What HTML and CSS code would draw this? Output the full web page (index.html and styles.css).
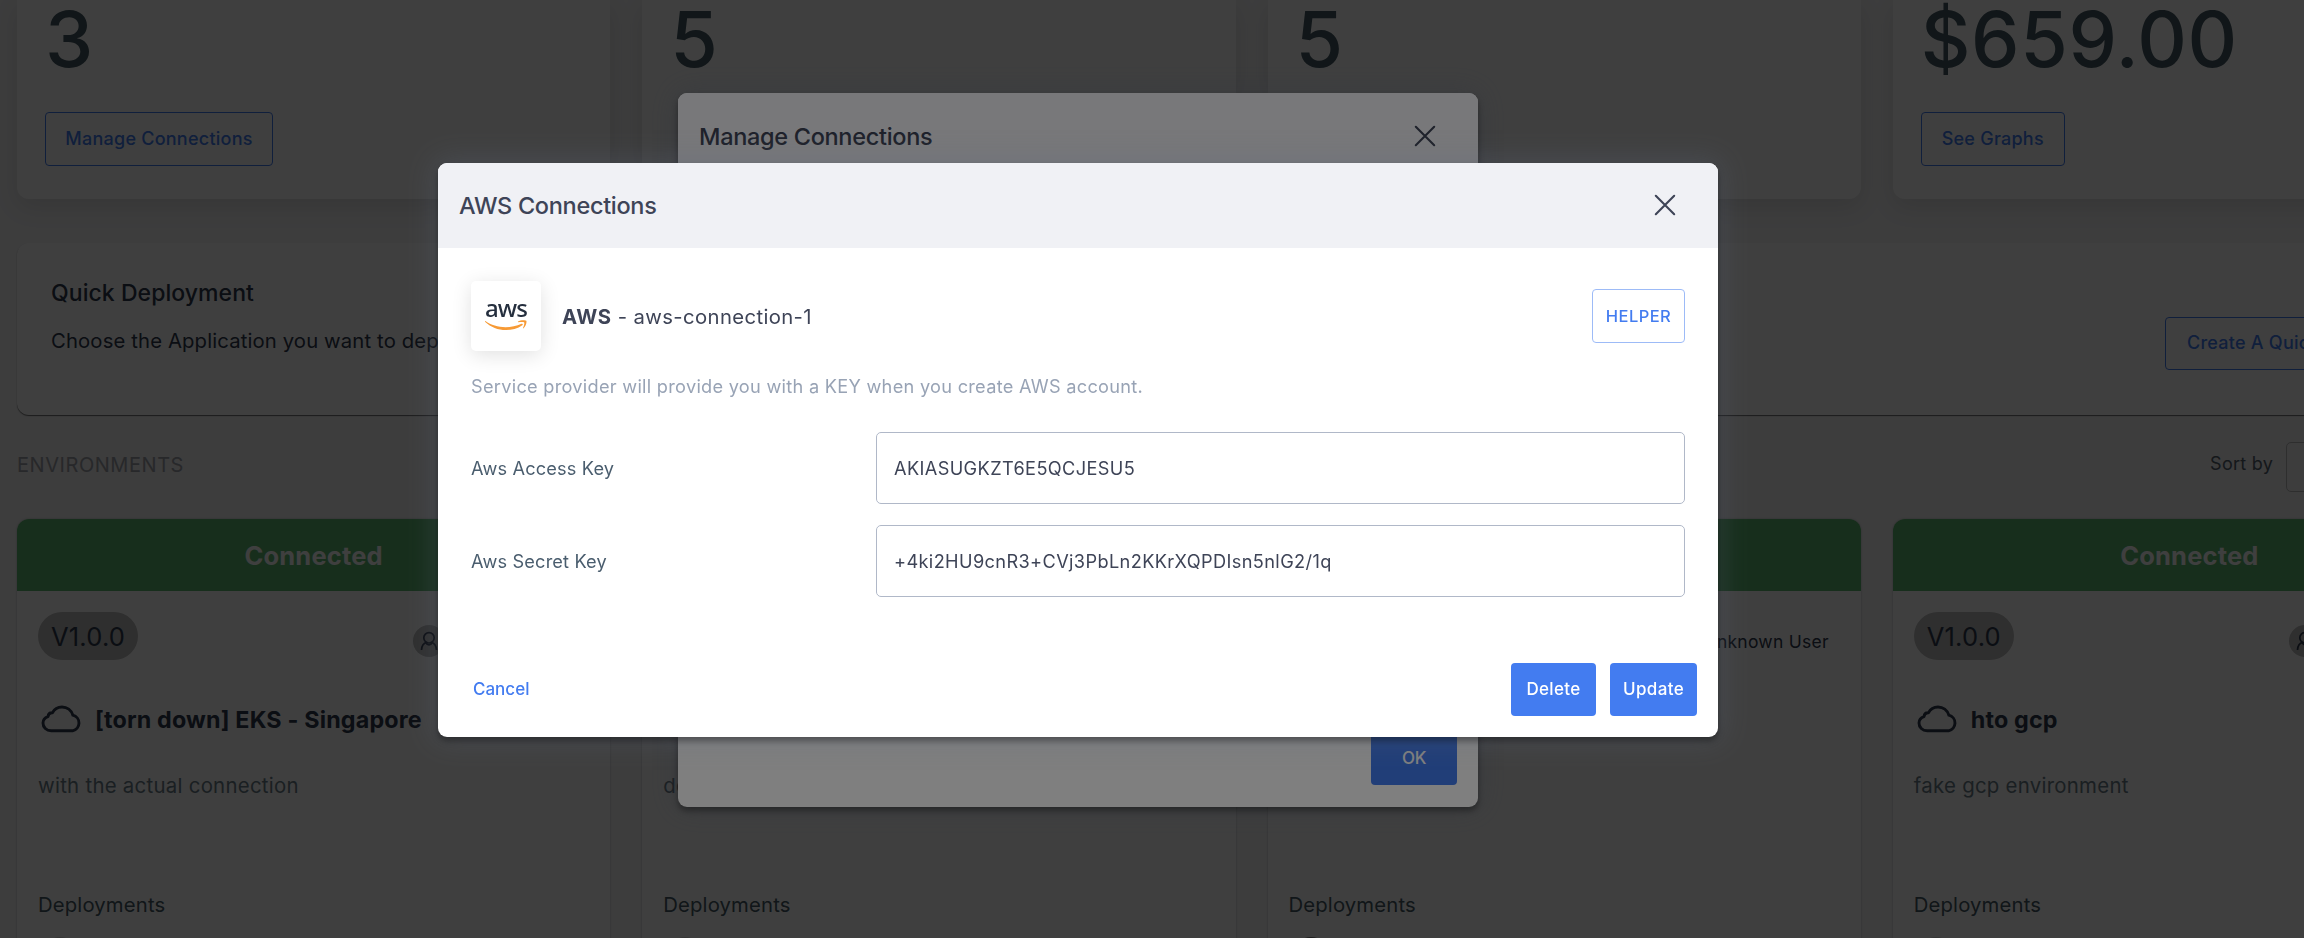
FILE: index.html
```html
<!DOCTYPE html>
<html lang="en">
<head>
<meta charset="utf-8">
<title>Dashboard</title>
<link rel="stylesheet" href="styles.css">
</head>
<body>
<svg class="sprite" aria-hidden="true">
  <symbol id="cloud" viewBox="0 0 42 28">
    <path d="M10.2 25.8H31.6A8 8 0 0 0 31.9 10.2C30.3 5.2 26 2 21 2C17 2 13.3 4.2 11.4 7.8C8.8 7.6 7.3 9.2 7 11.6C4.2 12.6 2 15 2 18C2 22.4 5.4 25.8 10.2 25.8Z" fill="none" stroke="currentColor" stroke-width="2.9" stroke-linejoin="round"/>
  </symbol>
  <symbol id="user" viewBox="0 0 32 32">
    <g fill="none" stroke="currentColor" stroke-width="1.7">
      <circle cx="16" cy="12.8" r="5.2"/>
      <path d="M8.5 25C8.5 21 11 17.8 13.4 17.3C13.4 20.6 18.6 20.6 18.6 17.3C21 17.800 23.500 21 23.500 25"/>
    </g>
  </symbol>
  <symbol id="close" viewBox="0 0 22 22">
    <path d="M1.800 1.800L20.200 20.200M20.200 1.800L1.800 20.200" fill="none" stroke="currentColor" stroke-width="2.100" stroke-linecap="round"/>
  </symbol>
</svg>

<main class="page">
  <section class="stats">
    <article class="stat"><div class="stat-value">3</div><button class="btn-outline stat-btn-wide">Manage Connections</button></article>
    <article class="stat"><div class="stat-value">5</div></article>
    <article class="stat"><div class="stat-value">5</div></article>
    <article class="stat"><div class="stat-value">$659.00</div><button class="btn-outline stat-btn">See Graphs</button></article>
  </section>

  <section class="quick">
    <div>
      <h2 class="quick-title">Quick Deployment</h2>
      <p class="quick-text">Choose the Application you want to deploy</p>
    </div>
    <button class="btn-outline quick-btn">Create A Quick Deployment</button>
  </section>

  <section class="toolbar">
    <h3 class="toolbar-title">ENVIRONMENTS</h3>
    <div class="sort"><span class="sort-label">Sort by</span><div class="select"></div></div>
  </section>

  <section class="envs">
    <article class="env">
      <header class="env-status">Connected</header>
      <div class="env-body">
        <div class="env-meta"><span class="badge">V1.0.0</span><span class="owner"><svg class="owner-icon"><use href="#user"/></svg>Unknown User</span></div>
        <div class="env-name"><svg class="cloud"><use href="#cloud"/></svg>[torn down] EKS - Singapore</div>
        <p class="env-desc">with the actual connection</p>
        <p class="env-sub">Deployments</p>
        <span class="dot"></span>
      </div>
    </article>
    <article class="env">
      <header class="env-status"></header>
      <div class="env-body">
        <div class="env-meta"><span class="badge"></span></div>
        <div class="env-name"><svg class="cloud"><use href="#cloud"/></svg></div>
        <p class="env-desc">de</p>
        <p class="env-sub">Deployments</p>
        <span class="dot"></span>
      </div>
    </article>
    <article class="env">
      <header class="env-status"></header>
      <div class="env-body">
        <div class="env-meta"><span class="badge"></span><span class="owner"><svg class="owner-icon"><use href="#user"/></svg>Unknown User</span></div>
        <div class="env-name"><svg class="cloud"><use href="#cloud"/></svg></div>
        <p class="env-desc"></p>
        <p class="env-sub">Deployments</p>
        <span class="dot dot-dark"></span>
      </div>
    </article>
    <article class="env">
      <header class="env-status">Connected</header>
      <div class="env-body">
        <div class="env-meta"><span class="badge">V1.0.0</span><span class="owner"><svg class="owner-icon"><use href="#user"/></svg>Unknown User</span></div>
        <div class="env-name"><svg class="cloud"><use href="#cloud"/></svg>hto gcp</div>
        <p class="env-desc">fake gcp environment</p>
        <p class="env-sub">Deployments</p>
        <span class="dot"></span>
      </div>
    </article>
  </section>
</main>

<div class="overlay">
  <section class="modal modal-manage">
    <header class="modal-head"><h2 class="modal-title">Manage Connections</h2><svg class="close"><use href="#close"/></svg></header>
    <footer class="manage-foot"><button class="btn-solid btn-ok">OK</button></footer>
  </section>
</div>

<div class="overlay">
  <section class="modal modal-aws">
    <header class="modal-head"><h2 class="modal-title">AWS Connections</h2><svg class="close"><use href="#close"/></svg></header>
    <div class="aws-body">
      <div class="provider">
        <div class="tile">
          <span class="aws-word">aws</span>
          <svg class="aws-smile" viewBox="0 0 42 10">
            <path d="M.4 1C6 5 13 7.200 20.500 7.200C26 7.200 31.600 6.100 36.600 3.800C37.600 3.400 38.200 4.500 37.300 5.200C32.800 8.500 26.500 10 21 10C13 10 5.800 7.100 .3 1.900C-.2 1.400 0 .8 .4 1Z" fill="#f79a35"/>
            <path d="M33 1.400C35.500 -.2 40.600 -.1 41.300 .8C42 1.700 41 6.300 38.500 8.300C38.100 8.600 37.800 8.400 38 8C38.600 6.500 39.800 3.300 39.200 2.500C38.600 1.700 35 2 33.500 2.200C33 2.200 32.700 1.700 33 1.400Z" fill="#f79a35"/>
          </svg>
        </div>
        <p class="provider-name"><b>AWS</b> - aws-connection-1</p>
        <button class="btn-outline btn-helper">HELPER</button>
      </div>
      <p class="hint">Service provider will provide you with a KEY when you create AWS account.</p>
      <div class="field"><label class="field-label">Aws Access Key</label><div class="field-input">AKIASUGKZT6E5QCJESU5</div></div>
      <div class="field"><label class="field-label">Aws Secret Key</label><div class="field-input">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</div></div>
    </div>
    <footer class="aws-foot">
      <a class="cancel">Cancel</a>
      <div class="actions"><button class="btn-solid btn-delete">Delete</button><button class="btn-solid btn-update">Update</button></div>
    </footer>
  </section>
</div>
</body>
</html>
```

FILE: styles.css
```css
* { box-sizing: border-box; margin: 0; }

body {
  height: 938px;
  overflow: hidden;
  background: #f4f4f5;
  font-family: Inter, "Liberation Sans", sans-serif;
  color: #2e384d;
}

.sprite { position: absolute; width: 0; height: 0; }
h2, h3 { font-weight: 500; }
button { font-family: inherit; padding: 0; white-space: nowrap; }

.page { width: 2486px; height: 938px; padding-left: 17px; overflow: hidden; }

.btn-outline {
  height: 54px;
  padding-bottom: 2px;
  border: 1px solid #437cf0;
  border-radius: 4px;
  background: none;
  color: #437cf0;
  font-size: 18px;
  font-weight: 500;
  letter-spacing: .24px;
}

.btn-solid {
  padding-bottom: 1px;
  border: 0;
  border-radius: 4px;
  background: #437cf0;
  color: #fff;
  font-size: 17px;
  font-weight: 500;
  letter-spacing: .35px;
}

/* Summary cards */
.stats, .envs { display: grid; grid-template-columns: repeat(4, 1fr); gap: 32px; }

.stat {
  height: 199px;
  padding: 0 28px;
  border-radius: 0 0 12px 12px;
  background: #fff;
  box-shadow: 0 8px 24px rgba(0, 0, 0, .1);
}

.stat-value {
  margin-bottom: 33px;
  color: #455a64;
  font-size: 77px;
  font-weight: 500;
  line-height: 79px;
  letter-spacing: .6px;
}

.stat-btn-wide { width: 228px; }
.stat-btn { width: 144px; }

/* Quick deployment */
.quick {
  display: flex;
  justify-content: space-between;
  height: 172px;
  margin-top: 44px;
  padding: 35px 27px 0 34px;
  border-radius: 12px;
  background: #fff;
  box-shadow: 0 1px 1px rgba(0, 0, 0, .55);
}

.quick-title { font-size: 23px; line-height: 30px; letter-spacing: .06px; }
.quick-text { margin-top: 20px; font-size: 20.3px; line-height: 26px; letter-spacing: .13px; }
.quick-btn { width: 294px; height: 53px; margin-top: 39px; padding-left: 21px; text-align: left; }

/* Environments toolbar */
.toolbar {
  display: flex;
  justify-content: space-between;
  align-items: center;
  height: 50px;
  margin: 27px 0;
}

.toolbar-title {
  padding-bottom: 5px;
  color: #9fa2a8;
  font-size: 20px;
  font-weight: 400;
  letter-spacing: .55px;
}

.sort { display: flex; align-items: center; gap: 13px; }
.sort-label { padding-bottom: 7px; font-size: 18px; letter-spacing: .25px; color: #53606d; }
.select { width: 200px; height: 50px; border: 1px solid #bbb; border-radius: 5px; }

/* Environment cards */
.env {
  height: 460px;
  border-radius: 12px 12px 0 0;
  background: #fff;
  box-shadow: 0 0 2px rgba(0, 0, 0, .25);
  overflow: hidden;
}

.env-status {
  height: 72px;
  background: #5cb870;
  color: #fff;
  font-size: 25.5px;
  font-weight: 700;
  line-height: 73px;
  letter-spacing: .16px;
  text-align: center;
}

.env-body { padding: 21px 32px 0 21px; }
.env-meta { display: flex; justify-content: space-between; align-items: flex-start; }

.badge {
  width: 100px;
  height: 48px;
  padding-left: 13px;
  border-radius: 24px;
  background: #bdbdbd;
  font-size: 25.5px;
  line-height: 50px;
  letter-spacing: .2px;
}

.owner {
  display: flex;
  align-items: center;
  gap: 8px;
  margin-top: 13px;
  font-size: 17.5px;
  letter-spacing: .25px;
}

.owner-icon { width: 32px; height: 32px; border-radius: 50%; background: #bdbdbd; }

.env-name {
  display: flex;
  align-items: center;
  gap: 12px;
  height: 30px;
  margin-top: 44px;
  padding-left: 3px;
  font-size: 23.3px;
  font-weight: 700;
  letter-spacing: .17px;
}

.cloud { width: 42px; height: 28px; margin-bottom: 1px; }

.env-desc {
  height: 26px;
  margin-top: 39px;
  color: #6b7c88;
  font-size: 20.4px;
  line-height: 26px;
  letter-spacing: .27px;
}

.env-sub {
  margin: 93px 0 19px;
  color: #455a64;
  font-size: 20.3px;
  line-height: 26px;
  letter-spacing: .15px;
}

.dot { display: block; width: 40px; height: 40px; margin-left: 2px; border-radius: 50%; background: #d8d8d8; }
.dot-dark { background: #777; }

/* Dialogs */
.overlay {
  position: fixed;
  inset: 0;
  display: flex;
  justify-content: center;
  align-items: center;
  padding-right: 148px;
  background: rgba(0, 0, 0, .5);
}

.modal {
  display: flex;
  flex-direction: column;
  border-radius: 9px;
  background: #fff;
  color: #3e4457;
  box-shadow: 0 4px 6px rgba(0, 0, 0, .35), 0 0 28px 4px rgba(95, 105, 125, .3);
  overflow: hidden;
}

.modal-manage { width: 800px; height: 714px; margin-bottom: 38px; }
.modal-aws { width: 1280px; height: 574px; margin-bottom: 38px; }

.modal-head {
  display: flex;
  justify-content: space-between;
  align-items: center;
  height: 85px;
  padding: 0 42px 0 21px;
  background: #f0f1f5;
}

.modal-manage .modal-head { height: 87px; }

.modal-title { font-size: 23.5px; letter-spacing: -.31px; }
.close { width: 22px; height: 22px; margin-bottom: 1px; }

.manage-foot { display: flex; justify-content: flex-end; margin-top: auto; padding: 0 21px 22px; }
.btn-ok { width: 86px; height: 53px; padding-bottom: 2px; letter-spacing: -.4px; }

.aws-body { padding: 33px 33px 0; }
.provider { display: flex; align-items: center; }

.tile {
  display: flex;
  flex-direction: column;
  align-items: center;
  width: 70px;
  height: 70px;
  padding-top: 15px;
  border-radius: 5px;
  background: #fff;
  box-shadow: 0 4px 20px rgba(0, 0, 0, .12);
}

.aws-word {
  height: 24px;
  color: #252f3e;
  font-family: "Noto Sans", sans-serif;
  font-size: 24px;
  font-weight: 500;
  line-height: 24px;
  letter-spacing: -1px;
}

.aws-smile { width: 42px; height: 10px; }

.provider-name { flex: 1; padding: 1px 0 0 21px; font-size: 20.3px; letter-spacing: .37px; }
.provider-name b { letter-spacing: .6px; }
.btn-helper { width: 93px; padding-bottom: 1px; border-color: #9dbbf7; font-size: 16.5px; letter-spacing: .45px; }

.hint {
  margin: 23px 0 33px;
  color: #98a3b5;
  font-size: 18.2px;
  line-height: 25px;
  letter-spacing: .27px;
}

.field { display: flex; align-items: center; height: 72px; margin-bottom: 21px; }
.field-label { width: 405px; color: #4a5d6e; font-size: 18.2px; letter-spacing: .15px; }

.field-input {
  flex: 1;
  height: 72px;
  padding-left: 17px;
  border: 1px solid #b0b8c8;
  border-radius: 5px;
  font-size: 18.2px;
  line-height: 71px;
  letter-spacing: .37px;
}

.aws-foot {
  display: flex;
  justify-content: space-between;
  align-items: center;
  margin-top: auto;
  padding: 0 21px 21px 35px;
}

.cancel { padding-bottom: 1px; color: #437cf0; font-size: 17px; font-weight: 500; }
.actions { display: flex; gap: 14px; }
.btn-delete { width: 85px; height: 53px; }
.btn-update { width: 87px; height: 53px; }
```
